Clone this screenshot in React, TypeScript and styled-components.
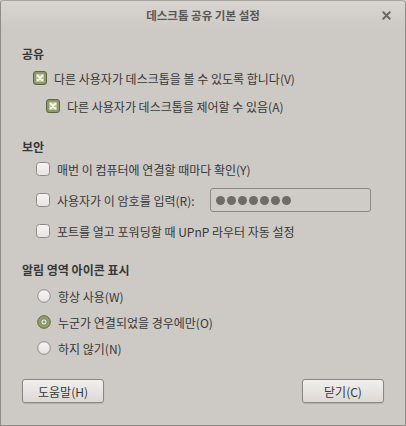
import React from "react";
import styled, { createGlobalStyle } from "styled-components";

const Global = createGlobalStyle`
  html, body { margin: 0; padding: 0; background: #cdc9c5; }
  body { font-family: "Noto Sans CJK KR", "Noto Sans", sans-serif; }
  * { box-sizing: border-box; }
`;

const Window = styled.div`
  width: 406px;
  height: 426px;
  display: flex;
  flex-direction: column;
  background: #cdc9c5;
  border: 1px solid #8f8b87;
  border-top-color: #a8a5a1;
  border-radius: 4px 4px 0 0;
  color: #383838;
  font-size: 12px;
  overflow: hidden;
`;

const TitleBar = styled.div`
  height: 28px;
  flex: none;
  display: flex;
  align-items: center;
  justify-content: center;
  position: relative;
  background: linear-gradient(#d8d5d1, #cdc9c5);
`;

const Title = styled.div`
  font-size: 11.5px;
  font-weight: 700;
  color: #5a5857;
`;

const Close = styled.div`
  position: absolute;
  right: 14px;
  top: 10px;
  width: 9px;
  height: 9px;
  display: flex;
`;

const Content = styled.div`
  display: flex;
  flex-direction: column;
  padding: 15px 21px 0 20px;
`;

const Section = styled.div<{ $top: number }>`
  display: flex;
  flex-direction: column;
  margin-top: ${(p) => p.$top}px;
`;

const Heading = styled.div`
  height: 18px;
  display: flex;
  align-items: center;
  font-weight: 700;
  font-size: 12px;
  padding-left: 1px;
`;

const List = styled.div<{ $gap: number; $top: number; $indent: number }>`
  display: flex;
  flex-direction: column;
  gap: ${(p) => p.$gap}px;
  margin-top: ${(p) => p.$top}px;
  padding-left: ${(p) => p.$indent}px;
`;

const Row = styled.div<{ $h: number; $sub?: number }>`
  height: ${(p) => p.$h}px;
  display: flex;
  align-items: center;
  padding-left: ${(p) => p.$sub || 0}px;
`;

const Label = styled.span<{ $gap: number }>`
  margin-left: ${(p) => p.$gap}px;
  white-space: nowrap;
`;

const BoxWrap = styled.span`
  width: 14px;
  height: 14px;
  display: inline-flex;
  flex: none;
`;

const Entry = styled.div`
  margin-left: auto;
  margin-right: 13px;
  width: 161px;
  height: 24px;
  border: 1px solid #8c8884;
  border-radius: 3px;
  background: #cfcbc7;
  display: flex;
  align-items: center;
  gap: 2px;
  padding-left: 5px;
`;

const Dot = styled.span`
  width: 9px;
  height: 9px;
  border-radius: 50%;
  background: #6f6b68;
`;

const Footer = styled.div`
  display: flex;
  justify-content: space-between;
  padding: 18px 21px 0 21px;
`;

const Button = styled.button`
  width: 82px;
  height: 24px;
  border: 1px solid #8a8682;
  border-radius: 3px;
  background: linear-gradient(#f1efed, #dcd9d5);
  box-shadow: 0 1px 1px rgba(0, 0, 0, 0.12);
  font-family: "Noto Sans CJK KR", "Noto Sans", sans-serif;
  font-size: 12px;
  color: #383838;
  padding: 0;
  display: flex;
  align-items: center;
  justify-content: center;
`;

const Checked = () => (
  <BoxWrap>
    <svg width="14" height="14" viewBox="0 0 14 14">
      <rect x="0.5" y="0.5" width="13" height="13" rx="2.5" fill="#8f9a68" stroke="#5c6642" />
      <rect x="3" y="3" width="8" height="8" rx="1" fill="#b9c19a" />
      <path d="M4.5 4.5 L9.5 9.5 M9.5 4.5 L4.5 9.5" stroke="#f6f7f0" strokeWidth="1.8" strokeLinecap="round" />
    </svg>
  </BoxWrap>
);

const Unchecked = () => (
  <BoxWrap>
    <svg width="14" height="14" viewBox="0 0 14 14">
      <defs>
        <linearGradient id="ub" x1="0" y1="0" x2="0" y2="1">
          <stop offset="0" stopColor="#f6f5f4" />
          <stop offset="1" stopColor="#e6e4e1" />
        </linearGradient>
      </defs>
      <rect x="0.5" y="0.5" width="13" height="13" rx="3" fill="url(#ub)" stroke="#8c8986" />
    </svg>
  </BoxWrap>
);

const Radio = ({ on }: { on?: boolean }) => (
  <BoxWrap>
    <svg width="14" height="14" viewBox="0 0 14 14">
      <defs>
        <linearGradient id="rb" x1="0" y1="0" x2="0" y2="1">
          <stop offset="0" stopColor="#f7f6f5" />
          <stop offset="1" stopColor="#e4e2df" />
        </linearGradient>
      </defs>
      {on ? (
        <>
          <circle cx="7" cy="7" r="6.3" fill="#93a06c" stroke="#5d6843" />
          <circle cx="7" cy="7" r="3.2" fill="#e8ecd8" stroke="#66714a" strokeWidth="0.8" />
          <circle cx="7" cy="7" r="1.4" fill="#8e9a68" />
        </>
      ) : (
        <circle cx="7" cy="7" r="6.3" fill="url(#rb)" stroke="#8c8986" />
      )}
    </svg>
  </BoxWrap>
);

export default function App() {
  return (
    <>
      <Global />
      <Window>
        <TitleBar>
          <Title>데스크톱 공유 기본 설정</Title>
          <Close>
            <svg width="9" height="9" viewBox="0 0 9 9">
              <path d="M1.3 1.3 L7.7 7.7 M7.7 1.3 L1.3 7.7" stroke="#6a6866" strokeWidth="2" strokeLinecap="round" />
            </svg>
          </Close>
        </TitleBar>
        <Content>
          <Section $top={0}>
            <Heading>공유</Heading>
            <List $gap={4} $top={4} $indent={12}>
              <Row $h={24}>
                <Checked />
                <Label $gap={7}>다른 사용자가 데스크톱을 볼 수 있도록 합니다(V)</Label>
              </Row>
              <Row $h={24} $sub={13}>
                <Checked />
                <Label $gap={7}>다른 사용자가 데스크톱을 제어할 수 있음(A)</Label>
              </Row>
            </List>
          </Section>
          <Section $top={19}>
            <Heading>보안</Heading>
            <List $gap={7} $top={2} $indent={15}>
              <Row $h={24}>
                <Unchecked />
                <Label $gap={7}>매번 이 컴퓨터에 연결할 때마다 확인(Y)</Label>
              </Row>
              <Row $h={24}>
                <Unchecked />
                <Label $gap={7}>사용자가 이 암호를 입력(R):</Label>
                <Entry>
                  {Array.from({ length: 7 }).map((_, i) => (
                    <Dot key={i} />
                  ))}
                </Entry>
              </Row>
              <Row $h={24}>
                <Unchecked />
                <Label $gap={7}>포트를 열고 포워딩할 때 UPnP 라우터 자동 설정</Label>
              </Row>
            </List>
          </Section>
          <Section $top={17}>
            <Heading>알림 영역 아이콘 표시</Heading>
            <List $gap={0} $top={5} $indent={16}>
              <Row $h={26}>
                <Radio />
                <Label $gap={7}>항상 사용(W)</Label>
              </Row>
              <Row $h={26}>
                <Radio on />
                <Label $gap={7}>누군가 연결되었을 경우에만(O)</Label>
              </Row>
              <Row $h={26}>
                <Radio />
                <Label $gap={7}>하지 않기(N)</Label>
              </Row>
            </List>
          </Section>
        </Content>
        <Footer>
          <Button>도움말(H)</Button>
          <Button>닫기(C)</Button>
        </Footer>
      </Window>
    </>
  );
}
